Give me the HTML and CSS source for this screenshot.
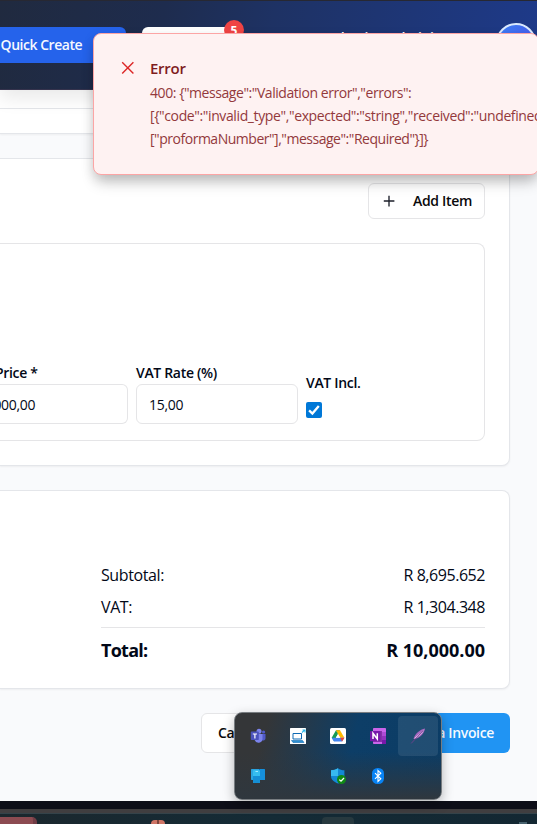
FILE: index.html
```html
<!DOCTYPE html>
<html lang="en">
<head>
<meta charset="utf-8">
<title>Create Invoice</title>
<link rel="stylesheet" href="styles.css">
</head>
<body>
<div class="screen">
  <header class="topbar">
    <div class="quick-create"><span>Quick Create</span></div>
    <div class="bell"><span class="badge">5</span></div>
    <div class="user-name">Production Administrator</div>
    <div class="avatar"></div>
  </header>

  <main class="page">
    <div class="strip"></div>
    <section class="card search-card"></section>

    <section class="card items-card">
      <div class="items-head">
        <button class="btn add-btn">
          <svg width="16" height="16" viewBox="0 0 16 16" fill="none" stroke="#1c1f2a" stroke-width="1.35"><path d="M2.8 8h10.6M8 2.8v10.6"/></svg>
          <span>Add Item</span>
        </button>
      </div>
      <div class="item">
        <div class="field price"><label>Price *</label><div class="input"><span>10000,00</span></div></div>
        <div class="field rate"><label>VAT Rate (%)</label><div class="input"><span>15,00</span></div></div>
        <div class="field incl">
          <label>VAT Incl.</label>
          <svg width="16" height="16" viewBox="0 0 16 16"><rect width="16" height="16" rx="2" fill="#0078d7"/><path d="M3.1 8.3 6.4 11.5 12.8 4.1" fill="none" stroke="#fff" stroke-width="2.3"/></svg>
        </div>
      </div>
    </section>

    <section class="card totals-card">
      <div class="row"><span>Subtotal:</span><span class="amount">R 8,695.652</span></div>
      <div class="row"><span>VAT:</span><span class="amount">R 1,304.348</span></div>
      <div class="row total"><span>Total:</span><span class="amount">R 10,000.00</span></div>
    </section>

    <div class="actions">
      <button class="btn cancel"><span>Cancel</span></button>
      <button class="btn create"><span>Create Proforma Invoice</span></button>
    </div>
  </main>

  <div class="window-edge"></div>
  <div class="taskbar">
    <div class="task-app"></div>
    <div class="task-dot"></div>
    <div class="task-chip"></div>
    <div class="task-tail"></div>
  </div>

  <div class="toast">
    <svg class="x" width="14" height="14" viewBox="0 0 14 14" fill="none" stroke="#dc2626" stroke-width="1.4"><path d="M1.2 1.2 12.4 12.4M12.4 1.2 1.2 12.4"/></svg>
    <div>
      <div class="toast-title"><span>Error</span></div>
      <div class="toast-line m1"><span>400: {"message":"Validation error","errors":</span></div>
      <div class="toast-line m2"><span>[{"code":"invalid_type","expected":"string","received":"undefined","path":</span></div>
      <div class="toast-line m3"><span>["proformaNumber"],"message":"Required"}]}</span></div>
    </div>
  </div>

  <div class="tray">
    <div class="cell">
      <svg width="16" height="16" viewBox="0 0 16 16"><circle cx="9" cy="3.3" r="2.5" fill="#7b83eb"/><circle cx="13.6" cy="4" r="1.6" fill="#5059c9"/><path d="M11 6h4.5v4.2a2.3 2.3 0 0 1-3.5 2z" fill="#5059c9"/><path d="M5 6h7.5v5a4 4 0 0 1-7.8 1z" fill="#7b83eb"/><rect x=".8" y="3.6" width="8" height="8.4" rx=".8" fill="#4b53bc"/><path d="M2.8 6h4.2M4.9 6v4.4" stroke="#fff" stroke-width="1.2"/></svg>
    </div>
    <div class="cell">
      <svg width="16" height="16" viewBox="0 0 16 16"><rect width="16" height="16" rx=".6" fill="#fff"/><path d="M3 11V5.500h8.500V11z" fill="none" stroke="#0e6ab4" stroke-width="1"/><path d="M1.500 12.500h11l1.500 2H3z" fill="#2b8fd0" stroke="#0e6ab4" stroke-width=".6"/><path d="M12 4.500 14.600 2.200M12.500 2h2.500v2.600" fill="none" stroke="#29b6ea" stroke-width="1.1"/></svg>
    </div>
    <div class="cell">
      <svg width="16" height="16" viewBox="0 0 16 16"><rect width="16" height="16" rx="1.5" fill="#fff"/><path d="M6 2.3 8 5.9 4.1 13.2 1.7 9.8z" fill="#169b55"/><path d="M6 2.3h4L8 5.9z" fill="#118044"/><path d="M10 2.3 14.4 9.8h-4.2L6 2.3z" fill="#ffba00"/><path d="M1.7 9.8h12.7l-2.3 3.7H4z" fill="#4285f4"/><path d="M10.2 9.8h4.2l-2.3 3.7z" fill="#ea4335"/><path d="M8 6.2 10.2 9.8H5.8z" fill="#fff"/></svg>
    </div>
    <div class="cell">
      <svg width="16" height="16" viewBox="0 0 16 16"><rect x="3" width="13" height="16" rx=".8" fill="#ca64ea"/><path d="M12 4h4v4h-4z" fill="#ae4bd5"/><path d="M12 8h4v4h-4z" fill="#9332bf"/><path d="M12 12h4v4h-4z" fill="#7719aa"/><path d="M3 3h9v11H3z" fill="#56127d" opacity=".6"/><rect y="3" width="10.4" height="10.2" rx=".8" fill="#7719aa"/><path d="M3 11V5.2L7.3 11V5.2" fill="none" stroke="#fff" stroke-width="1.5"/></svg>
    </div>
    <div class="cell active">
      <svg width="16" height="16" viewBox="0 0 16 16"><path d="M15 .5C10 1.500 4.500 6 3.500 11 8.500 11 14 6.500 15 .5z" fill="#a767c0"/><path d="M14.300 1.400 5.200 9.600l-1 1.500C8 9 12 6 14.300 1.400z" fill="#eed5f2"/><path d="M13.200 2.600 1.200 15.400" stroke="#72418d" stroke-width=".9"/></svg>
    </div>
    <div class="cell">
      <svg width="16" height="16" viewBox="0 0 16 16"><rect x="1" y="1" width="14" height="11" rx="1" fill="#0879c9"/><path d="M10 1h4a1 1 0 0 1 1 1v10h-5z" fill="#158fdb"/><path d="M1 2a1 1 0 0 1 1-1h7v11H2a1 1 0 0 1-1-1z" fill="#2aa4df"/><rect x="3" y="2" width="7" height="13" rx="1" fill="#35bdef"/><path d="M3 8h7v6a1 1 0 0 1-1 1H4a1 1 0 0 1-1-1z" fill="#158fd5"/><path d="M5.5 3.500h2.500" stroke="#a0eaff"/></svg>
    </div>
    <div class="cell"></div>
    <div class="cell">
      <svg width="16" height="16" viewBox="0 0 16 16"><path d="M8 .2c2 1.500 4 2 6.400 2V8c0 4-3 6-6.400 7.500C4.500 14 1 12 1 8V2.200C4 2.200 6 1.500 8 .2z" fill="#1389d6"/><path d="M8 .2V8H1V2.200C4 2.200 6 1.500 8 .2z" fill="#37baf0"/><path d="M8 8h6.400c0 4-3 6-6.400 7.500z" fill="#0d63b2"/><circle cx="11.500" cy="11.500" r="4.500" fill="#108a15"/><path d="M9.300 11.600 11 13.200 14 10" fill="none" stroke="#fff" stroke-width="1.300"/></svg>
    </div>
    <div class="cell">
      <svg width="16" height="16" viewBox="0 0 16 16"><rect x="2" width="12" height="16" rx="5.500" fill="#0883f4"/><path d="M5 5.200 10.800 10.800 8 13.400V2.600L10.800 5.200 5 10.800" fill="none" stroke="#fff" stroke-width="1.150"/></svg>
    </div>
  </div>
</div>
</body>
</html>
```
FILE: styles.css
```css
* { box-sizing: border-box; }
body { margin: 0; font-family: "Open Sans", "Noto Sans", sans-serif; color: #020817; }
.screen { position: relative; width: 537px; height: 824px; overflow: hidden; display: flex; flex-direction: column; background: #f9fafc; }
button { font-family: inherit; margin: 0; }
span, label { white-space: nowrap; }

.topbar { height: 90px; flex: none; display: flex; align-items: flex-start; border-top: 1px solid #272832; border-bottom: 1px solid #35334d; background: linear-gradient(100deg, #202a3f 0%, #1e2c4e 30%, #1e3264 50%, #1e3a8a 100%); box-shadow: 0 8px 18px rgba(0,0,0,.09); z-index: 1; }
.quick-create { width: 126px; height: 36px; margin-top: 26px; border-radius: 0 6px 6px 0; background: #2563eb; color: #f5f8ff; font-size: 14px; font-weight: 600; line-height: 36px; letter-spacing: -.47px; padding-left: .6px; }
.bell { position: relative; width: 98px; height: 36px; margin: 26px 0 0 16px; border-radius: 6px; background: #fff; }
.badge { position: absolute; right: -4px; top: -7px; width: 20px; height: 20px; border-radius: 50%; background: #ef4444; color: #fff; font-size: 12px; font-weight: 700; line-height: 22px; text-align: center; }
.user-name { width: 150px; margin: 26.6px 0 0 74px; font-size: 14px; line-height: 20px; font-weight: 600; color: #fff; letter-spacing: -.4px; white-space: nowrap; }
.avatar { width: 40px; height: 40px; flex: none; margin: 22px 0 0 32px; border-radius: 50%; border: 2px solid #dbeafe; background: linear-gradient(135deg, #3b82f6, #4f46e5); }

.page { height: 711px; flex: none; display: flex; flex-direction: column; }
.strip { height: 18px; background: #fff; flex: none; }
.card { flex: none; margin-right: 27px; background: #fff; border: 1px solid #e4e6ea; border-left: 0; border-radius: 0 8px 8px 0; box-shadow: 0 1px 2px rgba(0,0,0,.05); }
.search-card { height: 26px; margin-right: 0; border-right: 0; border-radius: 0; }
.items-card { height: 308px; margin-top: 24px; padding: 24px 24px 0 0; }
.items-head { display: flex; justify-content: flex-end; }
.btn { display: flex; align-items: center; border: 1px solid #e5e5e7; border-radius: 6px; background: #fff; font-size: 14px; font-weight: 600; color: #09090b; white-space: nowrap; }
.btn span { margin-top: -1px; }
.add-btn { width: 117px; height: 36px; padding: 0 0 0 12px; gap: 16px; letter-spacing: -.3px; }
.item { height: 198px; margin-top: 24px; padding-bottom: 16px; border: 1px solid #e5e5e7; border-left: 0; border-radius: 0 8px 8px 0; display: flex; align-items: flex-end; gap: 8px; }
.field label { display: block; font-size: 14px; font-weight: 600; line-height: 20px; letter-spacing: -.32px; padding-bottom: 1px; }
.input { height: 40px; border: 1px solid #e5e5e7; border-radius: 6px; font-size: 14px; line-height: 40px; letter-spacing: -.3px; }
.price { width: 128px; }
.price label { margin-left: -5px; }
.price .input { border-left: 0; border-radius: 0 6px 6px 0; display: flex; }
.price .input span { margin-left: -22px; }
.rate { width: 162px; }
.rate .input { padding-left: 12px; }
.incl { padding-bottom: 6px; }
.incl label { margin-bottom: 8px; }
.incl svg { display: block; }

.totals-card { height: 199px; margin-top: 24px; padding: 72px 24px 0 101px; }
.row { display: flex; justify-content: space-between; font-size: 16px; line-height: 24px; margin-bottom: 8px; letter-spacing: -.4px; }
.row .amount { letter-spacing: -.45px; }
.row.total { font-size: 18px; line-height: 28px; font-weight: 700; border-top: 1px solid #e5e5e7; padding-top: 8px; letter-spacing: -.75px; }
.row.total .amount { letter-spacing: 0; }

.actions { display: flex; justify-content: flex-end; gap: 16px; margin: 24px 27px 0 0; }
.actions .btn { height: 40px; padding: 0 16px; letter-spacing: -.35px; }
.cancel { width: 77px; }
.actions .create { width: 216px; border: 0; background: #2094f3; color: #f5faff; justify-content: flex-end; }

.window-edge { height: 12px; flex: none; background: linear-gradient(#0d0e18 0 8px, #403e40 8px 12px); }
.taskbar { height: 11px; flex: none; display: flex; align-items: flex-end; background: linear-gradient(90deg, #1b272d, #142b36 50%, #132732); border-top: 1px solid #34434a; overflow: hidden; }
.task-app { width: 37px; height: 7px; border-radius: 0 5px 0 0; background: #8c4b51; border-right: 4px solid #713d46; }
.task-dot { width: 14px; height: 4px; margin-left: 114px; border-radius: 7px 7px 0 0; background: linear-gradient(90deg, #d07566 0 6px, #7d453c 6px 8px, #d07566 8px); }
.task-chip { width: 32px; height: 7px; margin-left: 157px; border-radius: 4px 4px 0 0; background: #27393f; }
.task-tail { width: 8px; height: 2px; margin-left: 165px; background: #46616d; }

.toast { position: absolute; z-index: 2; left: 93px; top: 33px; width: 446px; height: 142px; padding: 23px 0 0 27px; display: flex; gap: 15px; background: #fef2f2; border: 1px solid #fca5a5; border-radius: 8px; box-shadow: 0 10px 15px -3px rgba(0,0,0,.2), 0 4px 12px rgba(0,0,0,.12); overflow: hidden; }
.toast .x { flex: none; margin-top: 4px; }
.toast-title { font-size: 15px; line-height: 22px; font-weight: 600; color: #7f1d1d; letter-spacing: -.25px; margin-bottom: 2px; }
.toast-line { font-size: 14px; line-height: 23px; color: #93393c; white-space: nowrap; }
.m1 { letter-spacing: -.44px; }
.m2 { letter-spacing: -.38px; }
.m3 { letter-spacing: -.48px; }

.tray { position: absolute; z-index: 3; left: 234px; top: 712px; width: 208px; height: 88px; padding: 3px; display: grid; grid-template-columns: repeat(5, 40px); grid-auto-rows: 40px; border: 1px solid #777c80; border-radius: 8px; background: linear-gradient(180deg, rgba(47,53,58,0) 45%, #2f373e 100%), linear-gradient(105deg, #343638 0 15%, #24394b 32%, #0d3e67 55%, #0b3c65 100%); box-shadow: 0 4px 12px rgba(0,0,0,.28); }
.cell { display: flex; align-items: center; justify-content: center; border-radius: 4px; }
.cell.active { background: rgba(255,255,255,.09); }
```
